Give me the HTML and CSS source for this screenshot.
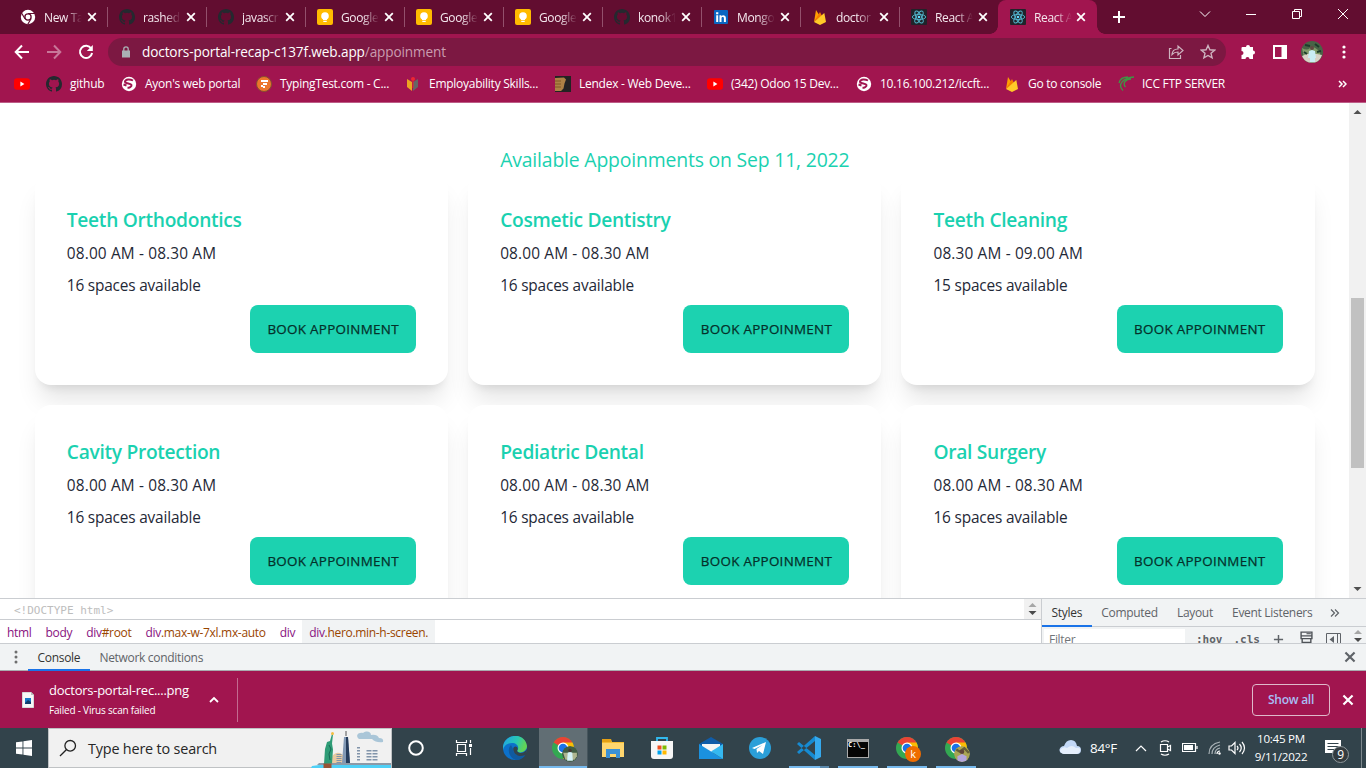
FILE: index.html
```html
<!DOCTYPE html>
<html lang="en">
<head>
<meta charset="utf-8">
<title>Doctors Portal</title>
<link rel="stylesheet" href="styles.css">
</head>
<body>
<svg class="defs" aria-hidden="true">
  <symbol id="x" viewBox="0 0 10 10"><path d="M1.2 1.2l7.6 7.6M8.8 1.2L1.2 8.8" fill="none" stroke="currentColor" stroke-width="1.8"/></symbol>
  <symbol id="github" viewBox="0 0 16 16"><path fill="#24292f" d="M8 0C3.58 0 0 3.58 0 8c0 3.54 2.29 6.53 5.47 7.59.4.07.55-.17.55-.38 0-.19-.01-.82-.01-1.49-2.01.37-2.53-.49-2.69-.94-.09-.23-.48-.94-.82-1.13-.28-.15-.68-.52-.01-.53.63-.01 1.08.58 1.23.82.72 1.21 1.87.87 2.33.66.07-.52.28-.87.51-1.07-1.78-.2-3.64-.89-3.64-3.95 0-.87.31-1.59.82-2.15-.08-.2-.36-1.02.08-2.12 0 0 .67-.21 2.2.82a7.6 7.6 0 0 1 4 0c1.53-1.04 2.2-.82 2.2-.82.44 1.1.16 1.92.08 2.12.51.56.82 1.27.82 2.15 0 3.07-1.87 3.75-3.65 3.95.29.25.54.73.54 1.48 0 1.07-.01 1.93-.01 2.2 0 .21.15.46.55.38A8.01 8.01 0 0 0 16 8c0-4.42-3.58-8-8-8z"/></symbol>
  <symbol id="keep" viewBox="0 0 16 16"><rect width="16" height="16" rx="2" fill="#fb0"/><circle cx="8" cy="7" r="3.8" fill="#fff"/><path d="M6 9h4v2H6zM6.3 11.7h3.4v1.3H6.3z" fill="#fff"/></symbol>
  <symbol id="react" viewBox="0 0 16 16"><rect width="16" height="16" rx="1" fill="#20232a"/><g fill="none" stroke="#53b9d1" stroke-width=".9"><ellipse cx="8" cy="8" rx="6.7" ry="2.6"/><ellipse cx="8" cy="8" rx="6.7" ry="2.6" transform="rotate(60 8 8)"/><ellipse cx="8" cy="8" rx="6.7" ry="2.6" transform="rotate(120 8 8)"/></g><circle cx="8" cy="8" r="1.3" fill="#61dafb"/></symbol>
  <symbol id="firebase" viewBox="0 0 16 16"><path d="M2 13L4 1l3.2 5z" fill="#ffa000"/><path d="M2 13L8 3l2 4z" fill="#f57c00"/><path d="M2 13L12.3 4 14 13l-6 3z" fill="#ffca28"/></symbol>
  <symbol id="youtube" viewBox="0 0 16 16"><rect y="2.3" width="16" height="11.4" rx="3" fill="#f00"/><path d="M6.4 5.6v4.8L10.4 8z" fill="#fff"/></symbol>
  <symbol id="globe" viewBox="0 0 16 16"><circle cx="8" cy="8" r="7.2" fill="#fff"/><path d="M12 4.500C9 2.800 4.500 3 4 5.500c-.3 2.500 6 1.500 6.500 3.500.4 1.800-2.500 2.800-4 2.800M2.500 8.500l3 1" fill="none" stroke="#a1154f" stroke-width="2"/></symbol>
  <symbol id="chrome" viewBox="0 0 24 24"><circle cx="12" cy="12" r="11" fill="#33a852"/><path d="M12 12L2.500 6.500A11 11 0 0 1 21.500 6.500z" fill="#ea4335"/><path d="M12 6.500h9.500A11 11 0 0 1 12 23l4.800-8.200z" fill="#fbbc04"/><circle cx="12" cy="12" r="5.500" fill="#fff"/><circle cx="12" cy="12" r="4.300" fill="#1a73e8"/></symbol>
  <symbol id="updown" viewBox="0 0 10 16"><path d="M1 6l4-4 4 4z" fill="#a6a6a6"/><path d="M1 10l4 4 4-4z" fill="#4a4a4a"/></symbol>
</svg>

<div class="tabstrip">
  <div class="tab"><svg class="fav" viewBox="0 0 16 16"><circle cx="8" cy="8" r="7.2" fill="#fff"/><circle cx="8" cy="8" r="3.1" fill="#fff" stroke="#620d30" stroke-width="1.3"/><path d="M8 4.5h7M5 9.7L1.5 4M11 9.8L7.8 15.2" stroke="#620d30" stroke-width="1.2"/></svg><span class="tab-name">New Ta</span><svg class="close"><use href="#x"/></svg></div>
  <div class="tab"><svg class="fav"><use href="#github"/></svg><span class="tab-name">rashed</span><svg class="close"><use href="#x"/></svg></div>
  <div class="tab"><svg class="fav"><use href="#github"/></svg><span class="tab-name">javascr</span><svg class="close"><use href="#x"/></svg></div>
  <div class="tab"><svg class="fav"><use href="#keep"/></svg><span class="tab-name">Google</span><svg class="close"><use href="#x"/></svg></div>
  <div class="tab"><svg class="fav"><use href="#keep"/></svg><span class="tab-name">Google</span><svg class="close"><use href="#x"/></svg></div>
  <div class="tab"><svg class="fav"><use href="#keep"/></svg><span class="tab-name">Google</span><svg class="close"><use href="#x"/></svg></div>
  <div class="tab"><svg class="fav"><use href="#github"/></svg><span class="tab-name">konok1</span><svg class="close"><use href="#x"/></svg></div>
  <div class="tab"><svg class="fav" viewBox="0 0 16 16"><rect x="1" y="1" width="14" height="14" rx="1" fill="#0a66c2"/><path d="M3.2 6.3h2V13h-2zM3.1 3.2h2.2v2H3.1zM6.5 6.3h1.9v.9c1-1.6 4.5-1.4 4.5 1.8v4h-2V9.500c0-2-2.400-1.900-2.400 0V13h-2z" fill="#fff"/></svg><span class="tab-name">Mongo</span><svg class="close"><use href="#x"/></svg></div>
  <div class="tab"><svg class="fav"><use href="#firebase"/></svg><span class="tab-name">doctor</span><svg class="close"><use href="#x"/></svg></div>
  <div class="tab no-sep"><svg class="fav"><use href="#react"/></svg><span class="tab-name">React A</span><svg class="close"><use href="#x"/></svg></div>
  <div class="tab active"><svg class="fav"><use href="#react"/></svg><span class="tab-name">React A</span><svg class="close"><use href="#x"/></svg></div>
  <svg class="newtab" viewBox="0 0 12 12"><path d="M6 0v12M0 6h12" stroke="#fff" stroke-width="2"/></svg>
  <div class="winbtns">
    <svg viewBox="0 0 12 12"><path d="M1 3.500l5 5 5-5"/></svg>
    <svg viewBox="0 0 12 12"><path d="M1 6.500h10"/></svg>
    <svg viewBox="0 0 12 12"><path d="M1.500 3.500h7v7h-7zM3.500 3.500v-2h7v7h-2"/></svg>
    <svg viewBox="0 0 12 12"><path d="M1 1l10 10M11 1L1 11"/></svg>
  </div>
</div>

<div class="toolbar">
  <div class="nav">
    <svg viewBox="0 0 16 16"><path d="M15 8H2M8 1.500L1.700 8 8 14.500"/></svg>
    <svg class="dim" viewBox="0 0 16 16"><path d="M1 8h13M8 1.500L14.300 8 8 14.500"/></svg>
    <svg viewBox="0 0 16 16"><path d="M13.200 4.500A6.100 6.100 0 1 0 14.100 9"/><path d="M14.800 1v6h-6z" fill="#fff" stroke="none"/></svg>
  </div>
  <div class="omnibox">
    <svg class="lock" viewBox="0 0 10 12"><rect x="1" y="4.500" width="8" height="7" fill="#aab0b4"/><path d="M2.800 5V3a2.200 2.200 0 0 1 4.400 0v2" fill="none" stroke="#aab0b4" stroke-width="1.300"/></svg>
    <span class="url">doctors-portal-recap-c137f.web.app<i>/appoinment</i></span>
    <svg class="share" viewBox="0 0 16 16"><path d="M3.500 4.500H1.500v10h11V11M4 10.500c.3-4 2.500-5.500 6-5.500V2l5 4.500-5 4.500V8c-3 0-4.500.8-6 2.500z"/></svg>
    <svg class="star" viewBox="0 0 16 16"><path d="M8 1.500l1.900 4.300 4.700.4-3.600 3.100 1.100 4.600L8 11.500l-4.100 2.400L5 9.300 1.400 6.200l4.700-.4z"/></svg>
  </div>
  <div class="tools">
    <svg viewBox="0 0 16 16"><path fill="#fff" d="M2.500 3H6a2 2 0 1 1 4 0h3v3.500a2 2 0 1 1 0 4V15H9.500a2 2 0 1 0-4 0h-4v-4a2 2 0 0 0 0-4V4q0-1 1-1z"/></svg>
    <svg viewBox="0 0 16 16"><path fill="#fff" fill-rule="evenodd" d="M1 1h14v14H1zM3 3v10h6.500V3z"/></svg>
    <svg class="avatar" viewBox="0 0 22 22"><circle cx="11" cy="11" r="11" fill="#496346"/><path d="M1 7q5 3 8 0t10 4v6H3z" fill="#7f9b68"/><path d="M1 15l5-2 10 0 5 1q-2 6-7 7.500H8Q3 20 1 15z" fill="#d8d2c6"/><circle cx="11" cy="7" r="2" fill="#614a42"/><path d="M8 10l3-1 3 1 1 7h-1v4H9v-4H7z" fill="#c9edf4"/><path d="M4 4l5 1M14 3l4 3M3 11l3 2M16 11l4-1" stroke="#1d3c2c" stroke-width="2"/></svg>
    <svg viewBox="0 0 16 16"><g fill="#fff"><circle cx="8" cy="3" r="1.600"/><circle cx="8" cy="8" r="1.600"/><circle cx="8" cy="13" r="1.600"/></g></svg>
  </div>
</div>

<div class="bookmarks">
  <div><svg><use href="#youtube"/></svg></div>
  <div><svg><use href="#github"/></svg>github</div>
  <div><svg><use href="#globe"/></svg>Ayon's web portal</div>
  <div><svg viewBox="0 0 16 16"><circle cx="8" cy="8" r="7.500" fill="#ec762c" stroke="#84512f"/><path d="M5 4h7v2H5zM7 7h2v2H7zM5 9h2v2H5zM9 7h2v2H9zM7 10h2v2H7z" fill="#fff"/></svg>TypingTest.com - C...</div>
  <div><svg viewBox="0 0 16 16"><path d="M2 3l5 3v9l-5-4z" fill="#eca421"/><path d="M8 6l5-3v8l-5 4z" fill="#656565"/><circle cx="8" cy="3" r="2" fill="#ef2632"/><path d="M8 5v7" stroke="#ef2632"/></svg>Employability Skills...</div>
  <div><svg viewBox="0 0 16 16"><path d="M0 0h16v16H0z" fill="#232323"/><path d="M0 2l9-.5 2 2-1.500 4-1 5-2.500 2.500H0z" fill="#ad8145"/><path d="M0 5h6M0 8h6M0 11h6" stroke="#805827"/></svg>Lendex - Web Deve...</div>
  <div><svg><use href="#youtube"/></svg>(342) Odoo 15 Dev...</div>
  <div><svg><use href="#globe"/></svg>10.16.100.212/iccft...</div>
  <div><svg><use href="#firebase"/></svg>Go to console</div>
  <div><svg viewBox="0 0 16 16"><path d="M5 14.500C-1 9 5 1.500 16 1M7.500 11C4 7 8 3 13 3M1 7C2 3 6 1 10 1" stroke="#3f9544" fill="none" stroke-width="1.300"/></svg>ICC FTP SERVER</div>
  <svg class="more" viewBox="0 0 9 8"><path d="M1 1l3 3-3 3M5 1l3 3-3 3" fill="none" stroke="#fff" stroke-width="1.500"/></svg>
</div>

<main class="viewport">
  <div class="page">
    <h2>Available Appoinments on Sep 11, 2022</h2>
    <div class="cards">
      <div class="card"><h3>Teeth Orthodontics</h3><p>08.00 AM - 08.30 AM</p><p class="spaces">16 spaces available</p><button>Book Appoinment</button></div>
      <div class="card"><h3>Cosmetic Dentistry</h3><p>08.00 AM - 08.30 AM</p><p class="spaces">16 spaces available</p><button>Book Appoinment</button></div>
      <div class="card"><h3>Teeth Cleaning</h3><p>08.30 AM - 09.00 AM</p><p class="spaces">15 spaces available</p><button>Book Appoinment</button></div>
      <div class="card"><h3>Cavity Protection</h3><p>08.00 AM - 08.30 AM</p><p class="spaces">16 spaces available</p><button>Book Appoinment</button></div>
      <div class="card"><h3>Pediatric Dental</h3><p>08.00 AM - 08.30 AM</p><p class="spaces">16 spaces available</p><button>Book Appoinment</button></div>
      <div class="card"><h3>Oral Surgery</h3><p>08.00 AM - 08.30 AM</p><p class="spaces">16 spaces available</p><button>Book Appoinment</button></div>
    </div>
  </div>
  <div class="scrollbar">
    <svg viewBox="0 0 17 17"><path d="M4.500 11l4-4 4 4z" fill="#505050"/></svg>
    <div class="thumb"></div>
    <svg viewBox="0 0 17 17"><path d="M4.500 6l4 4 4-4z" fill="#505050"/></svg>
  </div>
</main>

<section class="devtools">
  <div class="panes">
    <div class="elements">
      <div class="source"><code>&lt;!DOCTYPE html&gt;</code><svg class="spin"><use href="#updown"/></svg></div>
      <div class="crumbs"><span>html</span><span>body</span><span>div<b>#root</b></span><span>div<b>.max-w-7xl.mx-auto</b></span><span>div</span><span class="sel">div<b>.hero.min-h-screen.</b></span></div>
    </div>
    <div class="sidebar">
      <div class="side-tabs"><span class="on">Styles</span><span>Computed</span><span>Layout</span><span>Event Listeners</span><svg viewBox="0 0 10 8"><path d="M1 .5L4.500 4 1 7.500M5 .5L8.500 4 5 7.500" fill="none" stroke="#5f6368" stroke-width="1.200"/></svg></div>
      <div class="filter">
        <span class="input">Filter</span><code>:hov</code><code class="cls">.cls</code>
        <svg viewBox="0 0 12 12"><path d="M6 1v10M1 6h10" stroke="#5f6368" stroke-width="1.600"/></svg>
        <svg class="f2" viewBox="0 0 12 12"><path d="M1 1h10v6H1zM1 4.500h10M2 7.500v3h8v-3" fill="none" stroke="#4f5358" stroke-width="1.300"/><path d="M6 2.500h4" stroke="#4f5358"/></svg>
        <svg class="f3" viewBox="0 0 15 12"><path d="M.5.500h14v13H.500zM11.500.500v13" fill="none" stroke="#5f6368"/><path d="M8 3v7L3.500 6.500z" fill="#5f6368"/></svg>
        <svg class="f4"><use href="#updown"/></svg>
      </div>
    </div>
  </div>
  <div class="drawer">
    <svg class="dots" viewBox="0 0 4 14"><g fill="#6e6e6e"><circle cx="2" cy="2" r="1.500"/><circle cx="2" cy="7" r="1.500"/><circle cx="2" cy="12" r="1.500"/></g></svg>
    <span class="on">Console</span><span>Network conditions</span>
    <svg class="dclose"><use href="#x"/></svg>
  </div>
</section>

<div class="shelf">
  <svg class="file" viewBox="0 0 12 16"><path d="M0 0h9l3 3v13H0z" fill="#f7f7f7" stroke="#999" stroke-width=".6"/><path d="M9 0v3h3" fill="#bbb"/><path d="M3 6h6v6H3z" fill="#1879c7"/><path d="M3 11l3-3 3 2v2H3z" fill="#123d6b"/></svg>
  <div class="dl"><div class="dl-name">doctors-portal-rec....png</div><div class="dl-state">Failed - Virus scan failed</div></div>
  <svg class="up" viewBox="0 0 10 7"><path d="M1 6l4-4 4 4" fill="none" stroke="#fff" stroke-width="1.800"/></svg>
  <div class="rule"></div>
  <div class="showall">Show all</div>
  <svg class="sclose"><use href="#x"/></svg>
</div>

<footer class="taskbar">
  <div class="start"><svg viewBox="0 0 16 16"><path d="M0 2.300L6.500 1.400v6.100H0zM7.400 1.200L16 0v7.500H7.400zM0 8.400h6.500v6.200L0 13.700zM7.400 8.400H16V16l-8.600-1.200z" fill="#fff"/></svg></div>
  <div class="search">
    <svg class="mag" viewBox="0 0 18 18"><circle cx="11.200" cy="6.800" r="5.300"/><path d="M7.300 10.700L1 17"/></svg>
    <span>Type here to search</span>
    <svg class="city" viewBox="0 0 80 39"><path d="M19 34q2-12 10-10l5 3v7z" fill="#e8c9a0"/><path d="M8 34h72v2H6z" fill="#8c99a7"/><path d="M1 37l7-1h72v3H0z" fill="#4fd0f6"/><path d="M13 35l1-15 2-7 3-1 2-7 1 .5-1 9 1 6-1 14z" fill="#2e9c76"/><path d="M18 16l2 4-2 5 1 6" stroke="#176955" fill="none"/><circle cx="21.500" cy="4.500" r="1.500" fill="#f4bd43"/><path d="M12.500 34.500h8V39h-8z" fill="#975335"/><path d="M31 34l2-26h4l2 26z" fill="#8299b5"/><path d="M35 8h2l2 26h-4z" fill="#273d5c"/><path d="M35 7V2" stroke="#555"/><path d="M28 25v9" stroke="#8194aa" stroke-width="5" stroke-dasharray="1 1"/><path d="M47.500 18v15" stroke="#8194aa" stroke-width="3" stroke-dasharray="1.500 1.500"/><path d="M58 21v12M64 21v12" stroke="#8194aa" stroke-width="5" stroke-dasharray="1.500 1.500"/><path d="M48 10c-4-3-1-7 4-6 4-3 8-1 8 2q6-1 8 3 5 0 4 4-7 1-11-3z" fill="#aac6d8"/></svg>
  </div>
  <div class="pin sys"><svg viewBox="0 0 18 18"><circle cx="9" cy="9" r="6.800" fill="none" stroke="#fff" stroke-width="2"/></svg></div>
  <div class="pin sys view"><svg viewBox="0 0 18 18"><path d="M2.500 5.500h8v7h-8zM1.500 1v2.500h10V1M1.500 17v-2.500h10V17M15.500 1v3M15.500 9v7" fill="none" stroke="#fff" stroke-width="1.200"/><path d="M14 5h3v3h-3z" fill="#fff"/></svg></div>
  <div class="pin"><svg viewBox="0 0 24 24"><defs><linearGradient id="eg" x2="1" y2=".3"><stop stop-color="#20a0e8"/><stop offset=".6" stop-color="#28c8b4"/><stop offset="1" stop-color="#62d455"/></linearGradient></defs><circle cx="12" cy="12" r="12" fill="#0c71ca"/><path d="M0 10C2-3 22-4 24 10c0 6-8 8-10 5 3-4 0-8-5-8C5 7 1 9 0 14z" fill="url(#eg)"/><path d="M8 9c-5 5-1 14 6 15 4 0 7-3 8.500-5C17 21 10 19 10 13z" fill="#105a9f"/><path d="M14 15c2 3 7 3 10-2-.2 3-1 4-1.500 6-7 3-12-1-12.300-6 0-2 2-3.500 3.800-2 1 1 .9 3 0 4z" fill="#32434b"/></svg></div>
  <div class="pin current"><svg viewBox="0 0 24 24"><use href="#chrome"/></svg><svg class="badge" viewBox="0 0 14 14"><circle cx="7" cy="7" r="7" fill="#405d43"/><path d="M1 6l5 0 7 0 0 3-2 3H3z" fill="#afb690"/><path d="M5 6l2-1 2 1 .5 7h-5z" fill="#d4f1f7"/><circle cx="7" cy="4" r="1.500" fill="#493a35"/></svg></div>
  <div class="pin"><svg viewBox="0 0 24 24"><path d="M1 3h9l1 3h12v15H1z" fill="#f7bd32"/><path d="M1 7h22v14H1z" fill="#ffd66e"/><path d="M1 3h9v3H1z" fill="#e5a014"/><path d="M5 13h14v9h-4v-4H9v4H5z" fill="#3b91d5"/></svg></div>
  <div class="pin"><svg viewBox="0 0 24 24"><path d="M7 6V2h10v4" fill="none" stroke="#32b9ee" stroke-width="1.800"/><path d="M1 5h22v15q0 3-3 3H4q-3 0-3-3z" fill="#f7f7f7"/><path d="M7.500 9.500h4v4h-4z" fill="#f15022"/><path d="M12.500 9.500h4v4h-4z" fill="#7fba00"/><path d="M7.500 14.500h4v4h-4z" fill="#00a4ef"/><path d="M12.500 14.500h4v4h-4z" fill="#ffb900"/></svg></div>
  <div class="pin"><svg viewBox="0 0 24 24"><path d="M0 8l12-7 12 7v3H0z" fill="#105ca8"/><path d="M3 8h18v5l-9 4-9-4z" fill="#f5f5f5"/><path d="M0 8l24 15H0z" fill="#1b91df"/><path d="M24 8v15L12 15.500z" fill="#35b8f0"/></svg></div>
  <div class="pin"><svg viewBox="0 0 24 24"><circle cx="12" cy="12" r="11" fill="#2b9fd8"/><path d="M4 12l14-6-3 12-4-3-2 2-.5-4 6-4-8 4z" fill="#fff"/></svg></div>
  <div class="pin run split"><svg viewBox="0 0 24 24"><path d="M0 8l2-2 16 13v5zM0 16l2 2L18 5V0z" fill="#168bd2"/><path d="M18 0l6 3v18l-6 3z" fill="#35a9ed"/></svg></div>
  <div class="pin run"><svg viewBox="0 0 24 24"><path d="M1 3h22v19H1z" fill="#aaa"/><path d="M2 6h20v15H2z" fill="#050505"/></svg><span class="cmd">C:\_</span></div>
  <div class="pin run"><svg viewBox="0 0 24 24"><use href="#chrome"/></svg><span class="badge k">k</span></div>
  <div class="pin run"><svg viewBox="0 0 24 24"><use href="#chrome"/></svg><svg class="badge" viewBox="0 0 14 14"><circle cx="7" cy="7" r="7" fill="#a9a553"/><path d="M2 3l3 2 4-3 4 4" stroke="#655f38" fill="none" stroke-width="2"/><circle cx="7" cy="5" r="2" fill="#5f4538"/><path d="M3 9l4-2 4 2v4q-4 2-8 0z" fill="#b3a5dc"/></svg></div>
  <div class="tray">
    <svg class="cloud" viewBox="0 0 22 16"><path d="M5 15Q0 14 .5 10.500 1.500 7 5 7 7 1 12 1q5 0 6 6 4 0 4 4 0 4-4 4z" fill="#c2d8f7"/><path d="M5 15Q1 14 1 11q3-4 7-2 5-4 9 0 5-1 4 3-1 3-4 3z" fill="#e5effc"/></svg>
    <span class="temp">84°F</span>
    <svg class="t1" viewBox="0 0 12 8"><path d="M1 7l5-5 5 5"/></svg>
    <svg class="t2" viewBox="0 0 14 16"><path d="M2.500 4.500h7v7h-7zM9.500 7l3-1.500v5l-3-1.500M3 2q4-2.500 8 0M3 14q4 2.500 8 0"/></svg>
    <svg class="t3" viewBox="0 0 16 10"><path d="M.5.500h13v8H.500zM15 3v3"/><path d="M2 2h9v5H2z" fill="#fff" stroke="none"/></svg>
    <svg class="t4" viewBox="0 0 14 14"><path d="M1 13Q1 3 12 1M4 13q0-7 8-9M7 13q0-5 5-6" stroke="#aab3b7"/><path d="M9 13q0-3 3-3"/><circle cx="11.500" cy="12.500" r="1.200" fill="#fff" stroke="none"/></svg>
    <svg class="t5" viewBox="0 0 18 14"><path d="M1 5h2.500L7 1.500v11L3.500 9H1zM9 5q2 2 0 4M11.500 3q3.500 4 0 8M14 1q5 6 0 12"/></svg>
    <div class="clock"><div>10:45 PM</div><div>9/11/2022</div></div>
    <div class="notif"><svg viewBox="0 0 18 17"><path d="M1 0h16v13h-3l-3.500 3.500V13H1z" fill="#fff"/><path d="M3.500 3.500h11M3.500 6.500h11M3.500 9.500h8" stroke="#32434b" stroke-width="1.200"/></svg><span>9</span></div>
  </div>
</footer>
</body>
</html>
```
FILE: styles.css
```css
* { box-sizing: border-box; }
body { margin: 0; width: 1366px; height: 768px; overflow: hidden; display: flex; flex-direction: column; font-family: "Open Sans", "Noto Sans", sans-serif; font-size: 12px; letter-spacing: -.26px; background: #fff; }
svg { display: block; flex: none; }
.defs { display: none; }
h2, h3, p { margin: 0; }

.tabstrip { height: 34px; flex: none; display: flex; align-items: center; padding-left: 8px; background: #620d30; color: #f4e8ee; }
.tab { position: relative; width: 99px; height: 34px; display: flex; align-items: center; padding-left: 12px; }
.tab::after { content: ""; position: absolute; right: -1px; top: 7px; width: 1px; height: 20px; background: #93506c; }
.tab.no-sep::after { display: none; }
.fav { width: 16px; height: 16px; }
.tab-name { width: 43px; margin-left: 8px; white-space: nowrap; letter-spacing: -.35px; -webkit-mask-image: linear-gradient(90deg, #000 50%, transparent 88%); mask-image: linear-gradient(90deg, #000 50%, transparent 88%); }
.close { width: 10px; height: 10px; color: #fff; }
.tab.active { background: #a1154f; border-radius: 8px 8px 0 0; }
.tab.active .close { margin-left: -1px; }
.tab.active::before { content: ""; position: absolute; left: -8px; bottom: 0; width: 8px; height: 8px; background: radial-gradient(circle at 0 0, transparent 7.5px, #a1154f 8px); }
.tab.active::after { right: -8px; top: auto; bottom: 0; width: 8px; height: 8px; background: radial-gradient(circle at 100% 0, transparent 7.5px, #a1154f 8px); }
.newtab { width: 12px; height: 12px; margin-left: 16px; }
.winbtns { margin-left: auto; display: flex; gap: 34px; padding: 0 17px 6px 0; }
.winbtns svg { width: 12px; height: 12px; fill: none; stroke: #fff; stroke-width: 1; }

.toolbar { height: 36px; flex: none; display: flex; align-items: center; background: #a1154f; }
.nav { width: 108px; flex: none; display: flex; gap: 16px; padding-left: 14px; }
.nav svg { width: 16px; height: 16px; fill: none; stroke: #fff; stroke-width: 2; }
.nav .dim { opacity: .42; }
.omnibox { width: 1118px; height: 28px; flex: none; border-radius: 14px; background: #7c1842; display: flex; align-items: center; padding: 0 10px 0 13px; color: #fff; font-size: 13.6px; letter-spacing: -.12px; }
.lock { width: 10px; height: 12px; }
.url { margin-left: 11px; flex: 1; white-space: nowrap; line-height: 18px; padding-bottom: 1px; }
.url i { font-style: normal; color: #ca9caf; }
.share, .star { width: 16px; height: 16px; fill: none; stroke: #ceb3bf; stroke-width: 1.2; }
.star { margin-left: 16px; stroke-width: 1.4; }
.tools { width: 140px; flex: none; display: flex; align-items: center; padding-left: 14px; }
.tools svg { width: 16px; height: 16px; margin-right: 16px; }
.tools .avatar { width: 22px; height: 22px; margin: 0 13px 0 -3px; }
.tools svg:last-child { margin-right: 0; }

.bookmarks { height: 33px; flex: none; padding: 0 18px 5px 14px; display: grid; grid-template-columns: 32px 75px 135px 149px 150px 152px 149px 148px 114px 1fr 10px; align-items: center; background: #a1154f; border-bottom: 1px solid #bd5d87; color: #fff; white-space: nowrap; }
.bookmarks div { display: flex; align-items: center; gap: 8px; }
.bookmarks div svg { width: 16px; height: 16px; }
.more { width: 9px; height: 8px; }

.viewport { height: 495px; flex: none; display: flex; overflow: hidden; letter-spacing: 0; }
.page { width: 1349px; height: 495px; overflow: hidden; padding: 43px 34.2px 0 34.8px; background: #fff; }
.page h2 { height: 27px; line-height: 28px; font-size: 19.4px; letter-spacing: -.18px; font-weight: 400; color: #1ad1b0; text-align: center; white-space: nowrap; }
.cards { display: grid; grid-template-columns: repeat(3, 1fr); gap: 20px; }
.card { height: 212px; border-radius: 16px; padding: 32px; display: flex; flex-direction: column; gap: 8px; background: #fff; box-shadow: 0 20px 25px -5px rgba(0,0,0,.1), 0 8px 10px -6px rgba(0,0,0,.1); white-space: nowrap; }
.card h3 { height: 28px; line-height: 30px; font-size: 19.2px; letter-spacing: -.3px; font-weight: 600; color: #1ad1b0; }
.card p { height: 24px; line-height: 26px; font-size: 15.4px; letter-spacing: .15px; color: #1f2937; }
.card .spaces { letter-spacing: -.18px; }
.card button { align-self: flex-end; flex: none; width: 166px; height: 48px; padding: 0; border: 0; border-radius: 8px; background: #1cd2b0; color: #04302a; font: 500 13.4px "Open Sans", sans-serif; letter-spacing: .3px; text-transform: uppercase; -webkit-text-stroke: .25px #04302a; }
.scrollbar { width: 17px; background: #f1f1f1; display: flex; flex-direction: column; justify-content: space-between; }
.scrollbar svg { width: 17px; height: 17px; }
.thumb { width: 13px; height: 170px; margin: 178px 2px auto; background: #c1c1c1; }

.devtools { height: 73px; flex: none; border-top: 1px solid #cacdd1; color: #5f6368; letter-spacing: -.31px; }
.panes { height: 44px; display: flex; overflow: hidden; }
.elements { width: 1041px; }
.source { height: 20px; display: flex; justify-content: space-between; align-items: center; padding-left: 14px; }
code { font: 11px "DejaVu Sans Mono", monospace; letter-spacing: 0; }
.source code { color: #bdbdbd; padding-top: 2px; }
.spin { width: 17px; height: 20px; padding: 2px 3px; background: #f1f1f1; }
.crumbs { height: 24px; border-top: 1px solid #cacdd1; display: flex; color: #881280; white-space: nowrap; }
.crumbs span { padding: 0 7px; line-height: 25px; }
.crumbs b { font-weight: 400; color: #994500; }
.crumbs .sel { background: #f1f3f4; }
.sidebar { width: 325px; border-left: 1px solid #cacdd1; background: #f1f3f4; }
.side-tabs { height: 28px; border-bottom: 1px solid #cacdd1; display: flex; align-items: center; white-space: nowrap; }
.side-tabs span { height: 28px; line-height: 27px; padding: 0 9.6px; }
.side-tabs .on, .drawer .on { color: #333; border-bottom: 2px solid #1a73e8; }
.side-tabs svg { width: 10px; height: 8px; margin-left: 8px; }
.filter { height: 24px; display: flex; align-items: flex-start; padding: 2px 0 0 2px; white-space: nowrap; }
.input { width: 141px; height: 21px; padding: 2px 5px; background: #fff; color: #707478; }
.filter code { margin: 4px 0 0 11px; font-weight: bold; }
.filter svg { width: 11px; height: 11px; margin: 5px 0 0 13px; }
.filter .f2 { width: 13px; height: 13px; margin: 2px 0 0 16px; }
.filter .f3 { width: 15px; height: 12px; margin: 4px 0 0 13px; }
.filter .f4 { width: 10px; height: 16px; margin: -1px 0 0 12px; }
.drawer { height: 28px; border-top: 1px solid #cacdd1; border-bottom: 1px solid #a9abaf; background: #f1f3f4; display: flex; align-items: center; }
.dots { width: 4px; height: 14px; margin: 0 10px 0 14px; }
.drawer span { height: 26px; line-height: 28px; padding: 0 9.600px; }
.drawer .on { height: 27px; }
.dclose { width: 12px; height: 12px; margin: 0 10px 0 auto; color: #5f6368; }

.shelf { height: 57px; flex: none; background: #a1154f; color: #fff; display: flex; align-items: center; }
.file { width: 12px; height: 16px; margin-left: 22px; }
.dl { width: 160px; margin-left: 15px; white-space: nowrap; }
.dl-name { font-size: 13px; line-height: 20px; letter-spacing: -.25px; }
.dl-state { font-size: 10px; font-weight: 500; line-height: 20px; letter-spacing: -.2px; }
.up { width: 10px; height: 7px; }
.rule { width: 1px; height: 44px; margin-left: 18px; background: #c36a90; }
.showall { width: 78px; height: 32px; margin-left: auto; border: 1px solid #dfb9ca; border-radius: 4px; text-align: center; line-height: 30px; font-size: 12px; font-weight: 600; color: #a9bef4; }
.sclose { width: 12px; height: 12px; margin: 0 12px; color: #fff; }

.taskbar { height: 40px; flex: none; background: #32434b; color: #fff; display: flex; }
.start { width: 48px; display: grid; place-items: center; }
.start svg { width: 16px; height: 16px; }
.search { width: 344px; height: 40px; border: 1px solid #bfc2c4; background: #f1f1f1; color: #272727; display: flex; align-items: center; font-size: 14.400px; letter-spacing: -.18px; white-space: nowrap; }
.mag { width: 18px; height: 18px; margin: 0 11px 0 10px; fill: none; stroke: #222; stroke-width: 1.300; }
.city { width: 80px; height: 39px; margin-left: auto; }
.pin { position: relative; width: 49px; height: 40px; flex: none; display: grid; place-items: center; }
.pin > svg { width: 24px; height: 24px; }
.pin.sys { width: 48px; }
.pin.sys > svg { width: 18px; height: 18px; }
.pin.sys.view { width: 50px; padding-right: 2px; }
.pin.current { background: #616e74; border-right: 1px solid #46555c; }
.pin.current::after, .pin.run::after { content: ""; position: absolute; left: 0; right: 0; bottom: 0; height: 2px; background: #76b9ed; }
.pin.run::after { left: 5px; right: 4px; }
.pin.split::after { background: linear-gradient(90deg, #76b9ed 78%, #5b89ac 78%); }
.pin > .badge { position: absolute; left: 23px; top: 18px; width: 16px; height: 16px; border-radius: 50%; }
.k { background: #ef6c00; font-size: 11px; line-height: 15px; text-align: center; }
.cmd { position: absolute; left: 15px; top: 13px; font: bold 7px/8px "DejaVu Sans Mono", monospace; letter-spacing: 0; }
.tray { margin-left: auto; width: 307px; display: flex; align-items: center; white-space: nowrap; }
.tray > svg { fill: none; stroke: #fff; stroke-width: 1.200; }
.tray > .cloud { width: 22px; height: 16px; stroke: none; margin-top: -2px; }
.temp { width: 43px; margin-left: 9px; font-size: 13.4px; }
.t1 { width: 12px; height: 8px; margin-left: 2px; }
.t2 { width: 14px; height: 16px; margin-left: 11px; }
.t3 { width: 16px; height: 10px; margin-left: 10px; }
.t4 { width: 14px; height: 14px; margin-left: 10px; }
.t5 { width: 18px; height: 14px; margin-left: 6px; }
.clock { width: 60px; margin-left: 5px; text-align: center; line-height: 18px; font-size: 11.600px; }
.notif { position: relative; width: 38px; height: 40px; margin-left: 13px; padding-top: 12px; border-right: 1px solid #7d888d; }
.notif svg { width: 18px; height: 17px; }
.notif span { position: absolute; left: 8px; top: 18px; width: 17px; height: 17px; border-radius: 50%; border: 1px solid #8f999d; background: #333b3f; font-size: 12px; line-height: 15px; text-align: center; }
```
